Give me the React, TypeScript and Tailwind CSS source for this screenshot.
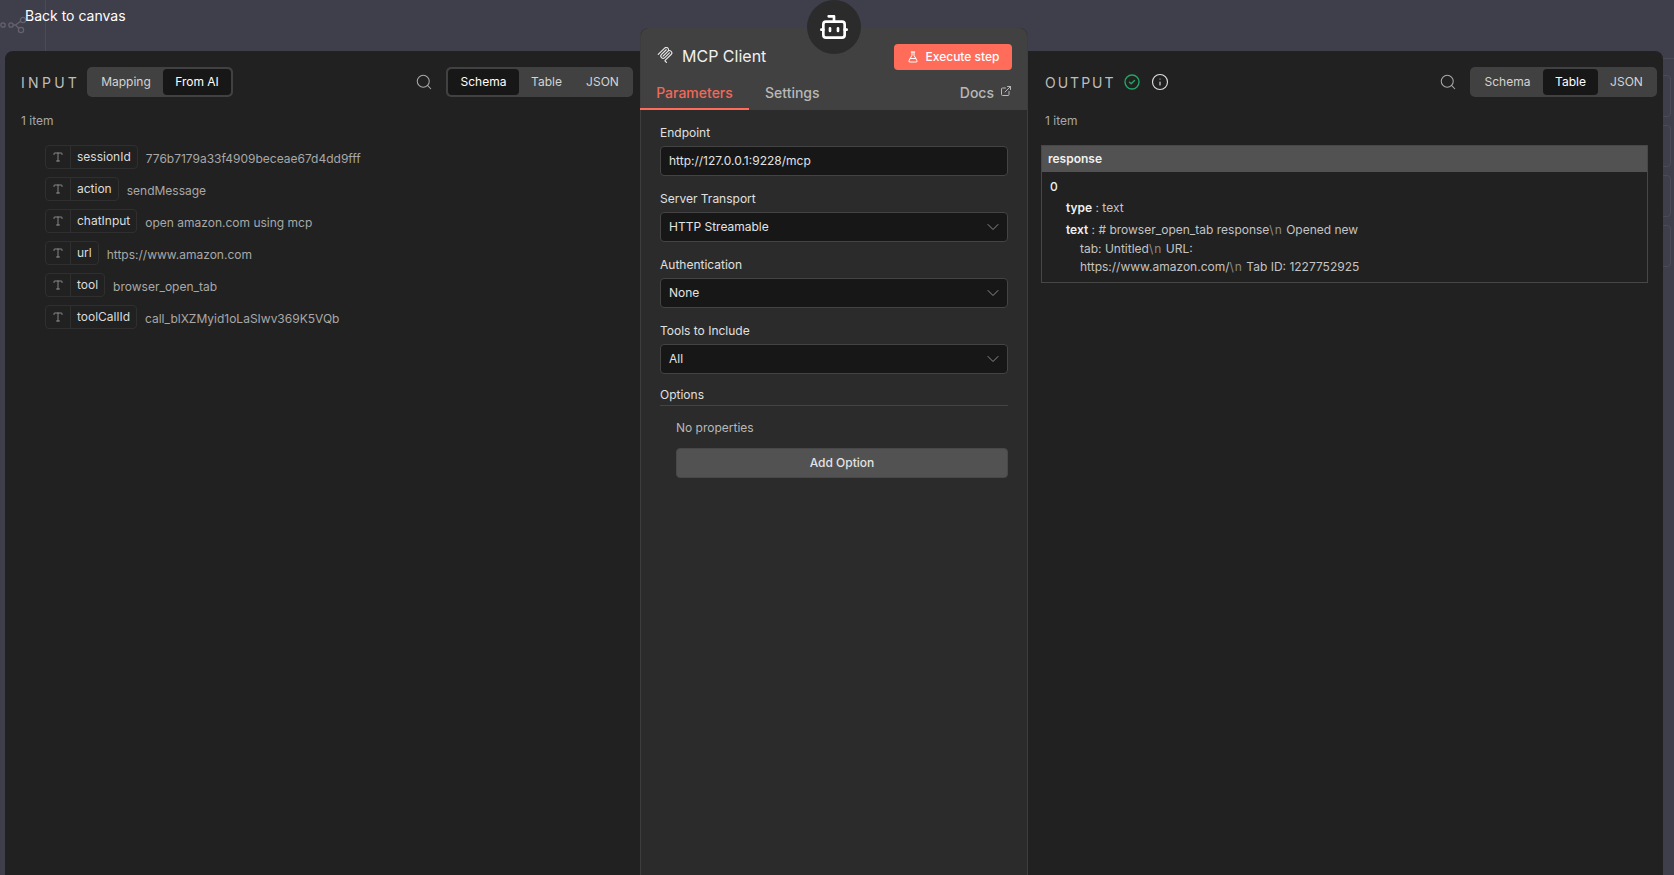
import { ChevronDown, ExternalLink, FlaskConical, Info, Search, Type } from "lucide-react";

const inputRows = [
  { name: "sessionId", value: "776b7179a33f4909beceae67d4dd9fff" },
  { name: "action", value: "sendMessage" },
  { name: "chatInput", value: "open amazon.com using mcp" },
  { name: "url", value: "https://www.amazon.com" },
  { name: "tool", value: "browser_open_tab" },
  { name: "toolCallId", value: "call_blXZMyid1oLaSIwv369K5VQb" },
];

const viewTabs = [
  { label: "Schema", width: "w-[71px]" },
  { label: "Table", width: "w-[55px]" },
  { label: "JSON", width: "w-[57px]" },
];

const ViewTabs = ({ active }: { active: string }) => (
  <div className="h-[30px] w-[187px] flex items-center rounded-[5px] bg-[#414141] p-[2px] text-[12px]">
    {viewTabs.map((tab) => (
      <div
        key={tab.label}
        className={
          tab.label === active
            ? `${tab.width} h-[26px] flex items-center justify-center rounded-[4px] bg-[#171717] text-white`
            : `${tab.width} h-[26px] flex items-center justify-center text-[#d4d4d4]`
        }
      >
        {tab.label}
      </div>
    ))}
  </div>
);

const Field = ({ label, value, select = true }: { label: string; value: string; select?: boolean }) => (
  <div className="mb-[11px]">
    <div className="h-[24px] flex items-center text-[12px] text-[#e0e0e0]">{label}</div>
    <div className="h-[30px] mt-[1px] flex items-center justify-between pl-[8px] pr-[4px] rounded-[4px] border border-[#444] bg-[#171717] text-[12px] text-[#e3e3e3]">
      <span>{value}</span>
      {select && <ChevronDown size={20} strokeWidth={1.2} className="text-[#8c8c8c]" />}
    </div>
  </div>
);

const BotIcon = () => (
  <svg width="32" height="32" viewBox="0 0 24 24" fill="none" stroke="white" strokeWidth="2" strokeLinecap="round" strokeLinejoin="round">
    <path d="M12 8V4H8" />
    <rect x="4" y="8" width="16" height="12" rx="2" />
    <path d="M2.5 14H4M20 14h1.5M9 13v2M15 13v2" />
  </svg>
);

const McpIcon = () => (
  <svg width="16" height="16" viewBox="0 0 24 24" fill="#e8e8e8">
    <path d="M15.688 2.343a2.588 2.588 0 00-3.61 0l-9.626 9.44a.863.863 0 01-1.203 0 .823.823 0 010-1.18l9.626-9.44a4.313 4.313 0 016.016 0 4.116 4.116 0 011.204 3.54 4.3 4.3 0 013.609 1.18l.05.05a4.115 4.115 0 010 5.9l-8.706 8.537a.274.274 0 000 .393l1.788 1.754a.823.823 0 010 1.18.863.863 0 01-1.203 0l-1.788-1.753a1.92 1.92 0 010-2.754l8.706-8.538a2.47 2.47 0 000-3.54l-.05-.049a2.588 2.588 0 00-3.607-.003l-7.172 7.034-.002.002-.098.097a.863.863 0 01-1.204 0 .823.823 0 010-1.18l7.273-7.133a2.47 2.47 0 00-.003-3.537z" />
    <path d="M14.485 4.703a.823.823 0 000-1.18.863.863 0 00-1.204 0l-7.119 6.982a4.115 4.115 0 000 5.9 4.314 4.314 0 006.016 0l7.12-6.982a.823.823 0 000-1.18.863.863 0 00-1.204 0l-7.119 6.982a2.588 2.588 0 01-3.61 0 2.47 2.47 0 010-3.54l7.12-6.982z" />
  </svg>
);

const CheckCircle = () => (
  <svg width="16" height="16" viewBox="0 0 16 16" fill="none">
    <circle cx="8" cy="8" r="7" stroke="#22a565" strokeWidth="1.4" />
    <path d="M5.5 8.2 7.2 9.8 10.5 6.4" stroke="#22a565" strokeWidth="1.4" strokeLinecap="round" strokeLinejoin="round" />
  </svg>
);

const Slash = () => <span className="text-[#8a8a8a] tracking-[1px]">\n</span>;

export default function App() {
  return (
    <div className="relative h-[875px] w-full overflow-hidden bg-[#3f3e4b] text-[#d4d4d4] font-['Inter',sans-serif]">
      {/* canvas behind the panels */}
      <svg className="absolute left-0 top-[14px]" width="28" height="24" fill="none" stroke="#63626e" strokeWidth="1.3">
        <circle cx="3" cy="11" r="2.2" />
        <circle cx="11" cy="11" r="2.2" />
        <circle cx="21" cy="16" r="2.6" />
        <circle cx="23" cy="6" r="2.6" />
        <path d="M13.2 11h2.3l3.5 3.5M15.5 11l5.5-4" />
      </svg>
      <div className="absolute left-[45px] top-0 h-[51px] w-px bg-[#4b4a58]" />
      <div className="absolute left-[1663px] top-[58px] h-px w-[11px] bg-[#4b4a58]" />
      {[75, 125, 175, 225].map((y) => (
        <div key={y} style={{ top: y }} className="absolute left-[1660px] h-[42px] w-[11px] rounded-[4px] border border-[#4b4a58]" />
      ))}

      {/* top strip */}
      <div className="relative h-[51px]">
        <div className="absolute left-[25px] top-[7px] text-[14px] text-white leading-[18px]">Back to canvas</div>
        {/* node icon over the panel edge */}
        <div className="absolute z-20 left-[807px] top-0 h-[54px] w-[54px] rounded-full bg-[#2b2b2b] flex items-center justify-center">
          <BotIcon />
        </div>
      </div>

      <div className="relative ml-[5px] mr-[11px] h-[824px] flex rounded-t-[8px] bg-[#212121]">
        {/* input */}
        <div className="w-[635px] shrink-0">
          <div className="h-[30px] mt-[16px] flex items-center pl-[16px] pr-[7px]">
            <span className="w-[66px] text-[14px] tracking-[3.3px] text-[#bdbdbd]">INPUT</span>
            <div className="h-[30px] w-[146px] flex items-center rounded-[5px] bg-[#414141] p-[2px] text-[12px]">
              <div className="h-[26px] w-[74px] flex items-center justify-center text-[#d4d4d4]">Mapping</div>
              <div className="h-[26px] w-[68px] flex items-center justify-center rounded-[4px] bg-[#171717] text-white">From AI</div>
            </div>
            <Search size={18} strokeWidth={1.4} className="ml-auto mr-[13px] text-[#a8a8a8]" />
            <ViewTabs active="Schema" />
          </div>
          <div className="mt-[16px] pl-[16px] text-[12px] leading-[16px] text-[#a8a8a8]">1 item</div>
          <div className="mt-[16px] pl-[40px] flex flex-col gap-[8px]">
            {inputRows.map((row) => (
              <div key={row.name} className="h-[24px] flex items-center gap-[8px]">
                <div className="h-[24px] flex items-center rounded-[4px] border border-[#2f2f2f] text-[12px] text-[#dcdcdc]">
                  <div className="w-[25px] h-full flex items-center justify-center border-r border-[#2f2f2f]">
                    <Type size={12} strokeWidth={1.5} className="text-[#a8a8a8]" />
                  </div>
                  <span className="px-[6px] -mt-[1px]">{row.name}</span>
                </div>
                <span className="text-[12px] text-[#a8a8a8] mt-[4px]">{row.value}</span>
              </div>
            ))}
          </div>
        </div>

        {/* parameters */}
        <div className="relative z-10 w-[388px] h-[847px] shrink-0 -mt-[23px] rounded-t-[8px] border-x border-[#3d3d3d] bg-[#2b2b2b]">
          <div className="h-[82px] rounded-t-[8px] bg-[#414141]">
            <div className="h-[49px] pt-[16px] pl-[16px] pr-[15px] flex items-start">
              <div className="mt-[3px]"><McpIcon /></div>
              <span className="ml-[9px] mt-[1px] text-[16px] leading-[22px] text-[#f0f0f0]">MCP Client</span>
              <button className="ml-auto h-[26px] w-[118px] flex items-center justify-center gap-[7px] rounded-[4px] bg-[#ff6d5a] text-[12px] font-medium text-white">
                <FlaskConical size={12} />
                Execute step
              </button>
            </div>
            <div className="h-[33px] -ml-px flex text-[14px] font-medium">
              <div className="w-[109px] h-[33px] flex items-center justify-center border-b-2 border-[#ff6d5a] text-[#f0695a]">Parameters</div>
              <div className="ml-[16px] pb-[2px] flex items-center text-[#b8b8b8]">Settings</div>
              <div className="ml-auto mr-[15px] pb-[2px] flex items-center gap-[6px] text-[#b8b8b8]">
                Docs
                <ExternalLink size={12} className="-mt-[3px]" />
              </div>
            </div>
          </div>
          <div className="px-[19px] pt-[11px]">
            <Field label="Endpoint" value="http://127.0.0.1:9228/mcp" select={false} />
            <Field label="Server Transport" value="HTTP Streamable" />
            <Field label="Authentication" value="None" />
            <Field label="Tools to Include" value="All" />
            <div className="h-[20px] flex items-center text-[12px] text-[#e0e0e0]">Options</div>
            <div className="h-px bg-[#444]" />
            <div className="pl-[16px]">
              <div className="h-[42px] pt-[2px] flex items-center text-[12px] text-[#b8b8b8]">No properties</div>
              <button className="w-full h-[30px] rounded-[4px] border border-[#484848] bg-[#525252] text-[12px] font-medium text-[#e3e3e3]">Add Option</button>
            </div>
          </div>
        </div>

        {/* output */}
        <div className="flex-1 min-w-0">
          <div className="h-[30px] mt-[16px] flex items-center pl-[17px] pr-[6px]">
            <span className="w-[79px] text-[14px] tracking-[2px] text-[#bdbdbd]">OUTPUT</span>
            <CheckCircle />
            <Info size={18} strokeWidth={1.5} className="ml-[11px] text-[#e0e0e0]" />
            <Search size={18} strokeWidth={1.4} className="ml-auto mr-[13px] text-[#a8a8a8]" />
            <ViewTabs active="Table" />
          </div>
          <div className="mt-[16px] pl-[17px] text-[12px] leading-[16px] text-[#a8a8a8]">1 item</div>
          <div className="mt-[16px] ml-[13px] mr-[15px] h-[138px] border border-[#474747] text-[12px]">
            <div className="h-[26px] flex items-center pl-[6px] bg-[#525252] font-semibold text-[#f0f0f0]">response</div>
            <div className="pl-[8px] pt-[7px] text-[#c4c4c4]">
              <div className="h-[16px] leading-[16px] font-medium text-[#f0f0f0]">0</div>
              <div className="ml-[16px] mt-[5px] leading-[16px]">
                <span className="font-semibold text-[#f0f0f0]">type</span> : text
              </div>
              <div className="ml-[16px] mt-[5px] leading-[18.5px]">
                <div>
                  <span className="font-semibold text-[#f0f0f0]">text</span> : # browser_open_tab response<Slash /> Opened new
                </div>
                <div className="pl-[14px]">tab: Untitled<Slash /> URL:</div>
                <div className="pl-[14px]">https://www.amazon.com/<Slash /> Tab ID: 1227752925</div>
              </div>
            </div>
          </div>
        </div>
      </div>
    </div>
  );
}
